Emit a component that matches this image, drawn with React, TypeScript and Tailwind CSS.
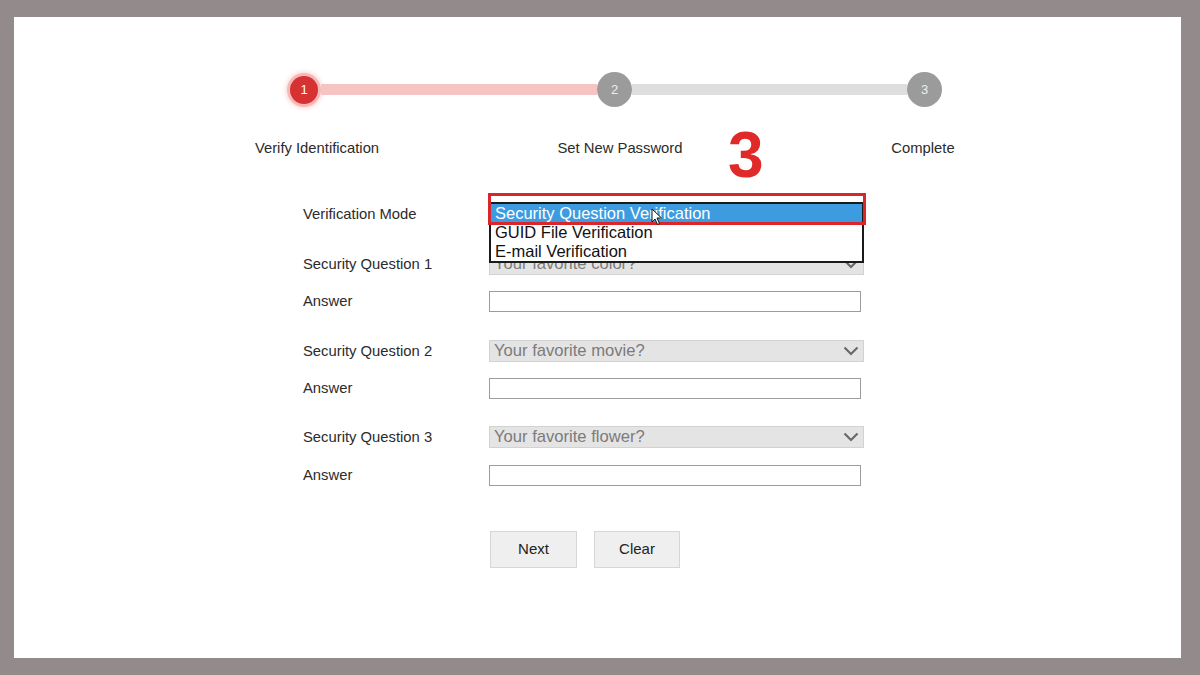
import React from 'react'

const font = { fontFamily: '"Liberation Sans", Arial, sans-serif' }

function Chevron() {
  return (
    <svg width="16" height="10" viewBox="0 0 16 10" className="text-[#6a6a6a]">
      <path d="M1.5 1.5 L8 8 L14.5 1.5" fill="none" stroke="currentColor" strokeWidth="2.2" />
    </svg>
  )
}

function Select({ value }: { value: string }) {
  return (
    <div className="flex h-[22px] w-[375px] items-center justify-between border border-[#d2d2d2] bg-[#e4e4e4] pl-[4px] pr-[4px] text-[16.6px] text-[#7b7b7b]">
      <span>{value}</span>
      <Chevron />
    </div>
  )
}

function TextInput() {
  return <div className="h-[21px] w-[372px] border border-[#9c9c9c] bg-white" />
}

function Row({ label, children, className }: { label: string; children: React.ReactNode; className?: string }) {
  return (
    <div className={'flex h-[22px] items-center ' + (className || '')}>
      <div className="w-[186px] text-[14.8px] text-[#2b2b2b]">{label}</div>
      <div className="relative">{children}</div>
    </div>
  )
}

function Cursor() {
  return (
    <svg width="12" height="18" viewBox="0 0 12 18" className="absolute left-[162px] top-[5px]">
      <path d="M1 1 L1 14 L4 11 L6.5 16.5 L8.5 15.5 L6 10 L10.5 10 Z" fill="#fff" stroke="#111" strokeWidth="1" />
    </svg>
  )
}

function Dropdown() {
  const options = ['Security Question Verification', 'GUID File Verification', 'E-mail Verification']
  return (
    <>
      <div className="absolute left-0 top-[-9px] z-10 w-[375px]">
        <div className="h-[8px] bg-white" />
        <div className="border-2 border-[#1a1a1a] bg-white text-[16.5px] leading-[19px]">
          {options.map((o, i) => (
            <div
              key={o}
              className={
                i === 0 ? 'bg-[#3d9be0] pl-[4px] text-white' : 'pl-[4px] text-[#111]'
              }
            >
              {o}
            </div>
          ))}
        </div>
      </div>
      <div className="absolute left-[-1px] top-[-10px] z-20 h-[32px] w-[378px] border-[3px] border-[#d8262b]" />
      <div className="absolute left-0 top-0 z-30">
        <Cursor />
      </div>
    </>
  )
}

function Stepper() {
  return (
    <div className="ml-[273px] flex items-center pt-[55px]">
      <div className="flex h-[34px] w-[34px] items-center justify-center">
        <div className="flex h-[28px] w-[28px] items-center justify-center rounded-full bg-[#d73232] text-[13px] text-white shadow-[0_0_0_3px_#f6b9b9,0_0_5px_4px_#fbd3d3]">
          1
        </div>
      </div>
      <div className="h-[11px] w-[276px] bg-[#f7c4c4]" />
      <div className="flex h-[35px] w-[35px] items-center justify-center rounded-full bg-[#9b9b9b] text-[13px] text-[#eeeeee]">
        2
      </div>
      <div className="h-[11px] w-[275px] bg-[#dedede]" />
      <div className="flex h-[35px] w-[35px] items-center justify-center rounded-full bg-[#9b9b9b] text-[13px] text-[#eeeeee]">
        3
      </div>
    </div>
  )
}

function App() {
  return (
    <div className="h-[675px] w-[1200px] bg-[#938b8b] pl-[14px] pt-[17px]" style={font}>
      <div className="relative h-[641px] w-[1167px] bg-white">
        <Stepper />
        <div className="ml-[178px] mt-[31px] flex gap-[53px] text-[14.8px] leading-[20px] text-[#2b2b2b]">
          <div className="w-[250px] text-center">Verify Identification</div>
          <div className="w-[250px] text-center">Set New Password</div>
          <div className="w-[250px] text-center">Complete</div>
        </div>

        <div className="absolute left-[714px] top-[106px] text-[64px] font-bold leading-[64px] text-[#e02a2a]">
          3
        </div>

        <div className="ml-[289px] mt-[45px]">
          <Row label="Verification Mode">
            <div className="h-[22px] w-[375px]" />
            <Dropdown />
          </Row>
          <Row label="Security Question 1" className="mt-[28px]">
            <Select value="Your favorite color?" />
          </Row>
          <Row label="Answer" className="mt-[15px]">
            <TextInput />
          </Row>
          <Row label="Security Question 2" className="mt-[28px]">
            <Select value="Your favorite movie?" />
          </Row>
          <Row label="Answer" className="mt-[15px]">
            <TextInput />
          </Row>
          <Row label="Security Question 3" className="mt-[27px]">
            <Select value="Your favorite flower?" />
          </Row>
          <Row label="Answer" className="mt-[16px]">
            <TextInput />
          </Row>

          <div className="ml-[187px] mt-[45px] flex gap-[17px]">
            <button className="h-[37px] w-[87px] border border-[#d6d6d6] bg-[#efefef] text-[15px] text-[#222]">
              Next
            </button>
            <button className="h-[37px] w-[86px] border border-[#d6d6d6] bg-[#efefef] text-[15px] text-[#222]">
              Clear
            </button>
          </div>
        </div>
      </div>
    </div>
  )
}

export default App
